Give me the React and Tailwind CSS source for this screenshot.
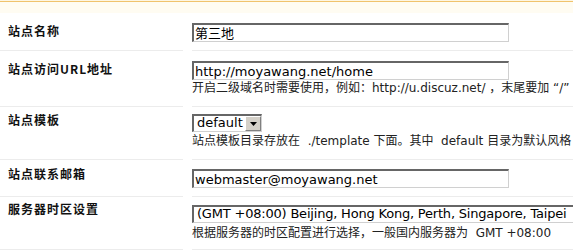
const Row = ({ label, labelPad, fieldPad, children }) => (
  <div className="flex">
    <div
      className={`w-[183px] shrink-0 border-b border-[#ececec] pl-[8px] ${labelPad}`}
    >
      <div className="whitespace-nowrap font-['Noto_Sans_CJK_SC',sans-serif] text-[12px] leading-[12px] font-bold tracking-[1px] text-[#111]">
        {label}
      </div>
    </div>
    <div
      className={`ml-[9px] min-w-0 flex-1 border-b border-[#ececec] ${fieldPad}`}
    >
      {children}
    </div>
  </div>
);

const TextBox = ({ value }) => (
  <div className="h-[19px] w-[317px] overflow-hidden whitespace-nowrap border-t-2 border-r border-b border-l-2 border-t-[#666] border-r-[#d0d0d0] border-b-[#d0d0d0] border-l-[#666] bg-white pt-px pl-px text-[13px] leading-[15px] text-black">
    {value}
  </div>
);

const Help = ({ className = "", children }) => (
  <div
    className={`whitespace-pre text-[12px] leading-[16px] text-[#222] ${className}`}
  >
    {children}
  </div>
);

const App = () => {
  return (
    <div className="h-[252px] w-full overflow-hidden bg-white font-['DejaVu_Sans','Noto_Sans_CJK_SC',sans-serif]">
      <div className="h-px bg-[#fdf6e3]" />
      <div className="h-px bg-[#f0c36d]" />
      <div className="h-[11px] bg-[#fffcf2]" />

      <Row label="站点名称" labelPad="pt-[12px]" fieldPad="pt-[10px] pb-[8px]">
        <TextBox value="第三地" />
      </Row>

      <Row
        label="站点访问URL地址"
        labelPad="pt-[12px]"
        fieldPad="pt-[10px] pb-[10px]"
      >
        <TextBox value="http://moyawang.net/home" />
        <Help>
          {"开启二级域名时需要使用，例如：http://u.discuz.net/ ，末尾要加 “/”"}
        </Help>
      </Row>

      <Row label="站点模板" labelPad="pt-[7px]" fieldPad="pt-[7px] pb-[10px]">
        <div className="flex h-[18px] w-[70px] border-t-2 border-r border-b border-l-2 border-t-[#666] border-r-[#d0d0d0] border-b-[#d0d0d0] border-l-[#666] bg-white">
          <div className="pl-[3px] text-[13px] leading-[14px] text-black">
            default
          </div>
          <div className="ml-auto flex h-full w-[16px] items-center justify-center border-t border-r border-b border-l border-t-white border-r-[#808080] border-b-[#808080] border-l-white bg-[#d4d0c8]">
            <svg width="7" height="4" viewBox="0 0 7 4">
              <path d="M0 0h7L3.5 4z" fill="#000" />
            </svg>
          </div>
        </div>
        <Help className="mt-px">
          {"站点模板目录存放在  ./template 下面。其中  default 目录为默认风格"}
        </Help>
      </Row>

      <Row label="站点联系邮箱" labelPad="pt-[8px]" fieldPad="pt-[9px] pb-[8px]">
        <TextBox value="webmaster@moyawang.net" />
      </Row>

      <Row label="服务器时区设置" labelPad="pt-[6px]" fieldPad="pt-[8px] pb-[8px]">
        <div className="h-[18px] w-[420px] overflow-hidden whitespace-nowrap border-t-2 border-r border-b border-l-2 border-t-[#666] border-r-[#d0d0d0] border-b-[#d0d0d0] border-l-[#666] bg-white pl-[3px] text-[13px] leading-[14px] tracking-[-0.2px] text-black">
          (GMT +08:00) Beijing, Hong Kong, Perth, Singapore, Taipei
        </div>
        <Help className="mt-[2px]">
          {"根据服务器的时区配置进行选择，一般国内服务器为  GMT +08:00"}
        </Help>
      </Row>
    </div>
  );
};

export default App;
